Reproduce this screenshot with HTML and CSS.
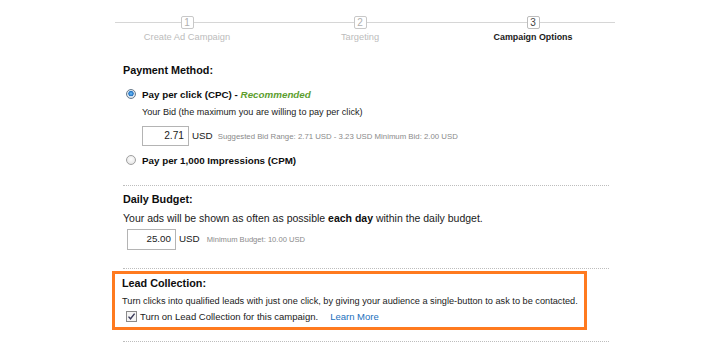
FILE: index.html
```html
<!DOCTYPE html>
<html>
<head>
<meta charset="utf-8">
<link rel="stylesheet" href="styles.css">
</head>
<body>
<div class="page">
  <div class="steps">
    <div class="step done"><span class="num">1</span><span class="label">Create Ad Campaign</span></div>
    <div class="step done"><span class="num">2</span><span class="label">Targeting</span></div>
    <div class="step current"><span class="num">3</span><span class="label">Campaign Options</span></div>
  </div>

  <div class="content">
    <section class="block payment">
      <h2 class="title">Payment Method:</h2>
      <div class="option">
        <span class="radio checked"></span>
        <span class="opt-label">Pay per click (CPC)</span>
        <span class="rec">&nbsp;- <em>Recommended</em></span>
      </div>
      <p class="hint bid indent">Your Bid (the maximum you are willing to pay per click)</p>
      <div class="amount indent">
        <span class="field">2.71</span>
        <span class="cur">USD</span>
        <span class="small">Suggested Bid Range: 2.71 USD - 3.23 USD Minimum Bid: 2.00 USD</span>
      </div>
      <div class="option cpm">
        <span class="radio"></span>
        <span class="opt-label">Pay per 1,000 Impressions (CPM)</span>
      </div>
    </section>

    <div class="sep"></div>

    <section class="block budget">
      <h2 class="title">Daily Budget:</h2>
      <p class="hint">Your ads will be shown as often as possible <b>each day</b> within the daily budget.</p>
      <div class="amount budget-amount">
        <span class="field">25.00</span>
        <span class="cur">USD</span>
        <span class="small">Minimum Budget: 10.00 USD</span>
      </div>
    </section>

    <div class="sep"></div>

    <section class="lead">
      <h2 class="title">Lead Collection:</h2>
      <p class="hint lead-text">Turn clicks into qualified leads with just one click, by giving your audience a single-button to ask to be contacted.</p>
      <div class="check-row">
        <svg class="check" width="11" height="11" viewBox="0 0 11 11">
          <rect x="0.5" y="0.5" width="10" height="10" fill="#f4f4f4" stroke="#8a8a8a"/>
          <path d="M2.5 5.6 L4.5 7.8 L8.6 2.6" fill="none" stroke="#3b3b5a" stroke-width="1.4"/>
        </svg>
        <span class="check-label">Turn on Lead Collection for this campaign.</span>
        <a class="learn">Learn More</a>
      </div>
    </section>

    <div class="sep last"></div>
  </div>
</div>
</body>
</html>
```

FILE: styles.css
```css
* { box-sizing: border-box; }
html, body { margin: 0; padding: 0; background: #fff; }
body {
  font-family: "Liberation Sans", Arial, sans-serif;
  color: #1a1a1a;
  width: 724px;
  height: 360px;
  overflow: hidden;
}
.page { padding-top: 16px; }

.steps {
  position: relative;
  margin-left: 115px;
  width: 500px;
  display: grid;
  grid-template-columns: 144px 144px 144px;
  column-gap: 29px;
}
.steps::before {
  content: "";
  position: absolute;
  left: 0;
  right: 0;
  top: 6px;
  height: 1px;
  background: #d6d6d6;
}
.step {
  position: relative;
  display: flex;
  flex-direction: column;
  align-items: center;
}
.num {
  width: 13px;
  height: 13px;
  border: 1px solid #c8c8c8;
  border-radius: 2px;
  background: #fff;
  font-size: 10px;
  line-height: 11px;
  text-align: center;
  color: #b0b0b0;
}
.step.current .num { color: #444; border-color: #bdbdbd; }
.label {
  margin-top: 2px;
  font-size: 9.3px;
  line-height: 13px;
  color: #bcbcbc;
}
.step.current .label { color: #1a1a1a; font-weight: bold; font-size: 8.9px; }

.content {
  margin-left: 123px;
  width: 486px;
  margin-top: 18px;
}
.title {
  margin: 0;
  font-size: 10.8px;
  line-height: 16px;
  font-weight: bold;
  color: #0d0d0d;
}
.option {
  display: flex;
  align-items: center;
  margin-top: 8px;
  height: 16px;
  font-size: 9.8px;
  font-weight: bold;
  color: #0d0d0d;
}
.option.cpm { margin-top: 6px; }
.radio {
  width: 10px;
  height: 10px;
  margin-left: 3px;
  margin-right: 6px;
  border-radius: 50%;
  border: 1px solid #a0a0a0;
  background: radial-gradient(circle at 50% 40%, #fff 0, #ececec 60%, #d4d4d4 100%);
}
.radio.checked {
  border-color: #6a7b8c;
  background: radial-gradient(circle at 50% 45%, #6fc3ff 0, #1f6fbf 40%, #dfe9f2 50%, #c9d4de 100%);
}
.rec em { color: #5d9e2f; font-style: italic; font-weight: bold; }
.hint {
  margin: 3px 0 0;
  font-size: 10.5px;
  line-height: 14px;
}
.hint.bid { font-size: 9.1px; }
.hint b { color: #0d0d0d; }
.indent { margin-left: 19px; }
.amount {
  display: flex;
  align-items: center;
  margin-top: 7px;
  height: 20px;
}
.field {
  width: 47px;
  height: 20px;
  border: 1px solid #b4b4b4;
  font-size: 10.2px;
  line-height: 18px;
  text-align: right;
  padding-right: 4px;
}
.cur {
  margin-left: 3px;
  font-size: 9.8px;
  position: relative;
  top: -1px;
}
.small {
  margin-left: 5px;
  font-size: 7.8px;
  color: #8a8a8a;
}
.sep {
  margin-top: 17px;
  height: 0;
  border-top: 1px dotted #bdbdbd;
}
.budget .title { margin-top: 5px; }
.budget .hint { margin-top: 4px; }
.budget-amount { margin-top: 4px; margin-left: 4px; width: max-content; }
.budget-amount .field { width: 49px; height: 21px; font-size: 9.8px; }
.budget-amount .small { font-size: 7.6px; margin-left: 7px; }
.budget + .sep { margin-top: 19px; }

.lead {
  margin-top: 2px;
  margin-left: -11px;
  width: 475px;
  border: 3px solid #ff7a1f;
  padding: 1px 0 4px 7px;
}
.lead .hint.lead-text { margin-top: 3px; font-size: 9.2px; }
.check-row {
  display: flex;
  align-items: center;
  height: 14px;
  margin-top: 1px;
  margin-left: 4px;
  font-size: 9.5px;
}
.check { margin-right: 3px; }
.learn {
  margin-left: 12px;
  color: #1a6fbd;
  text-decoration: none;
}
.sep.last { margin-top: 11px; }
```
